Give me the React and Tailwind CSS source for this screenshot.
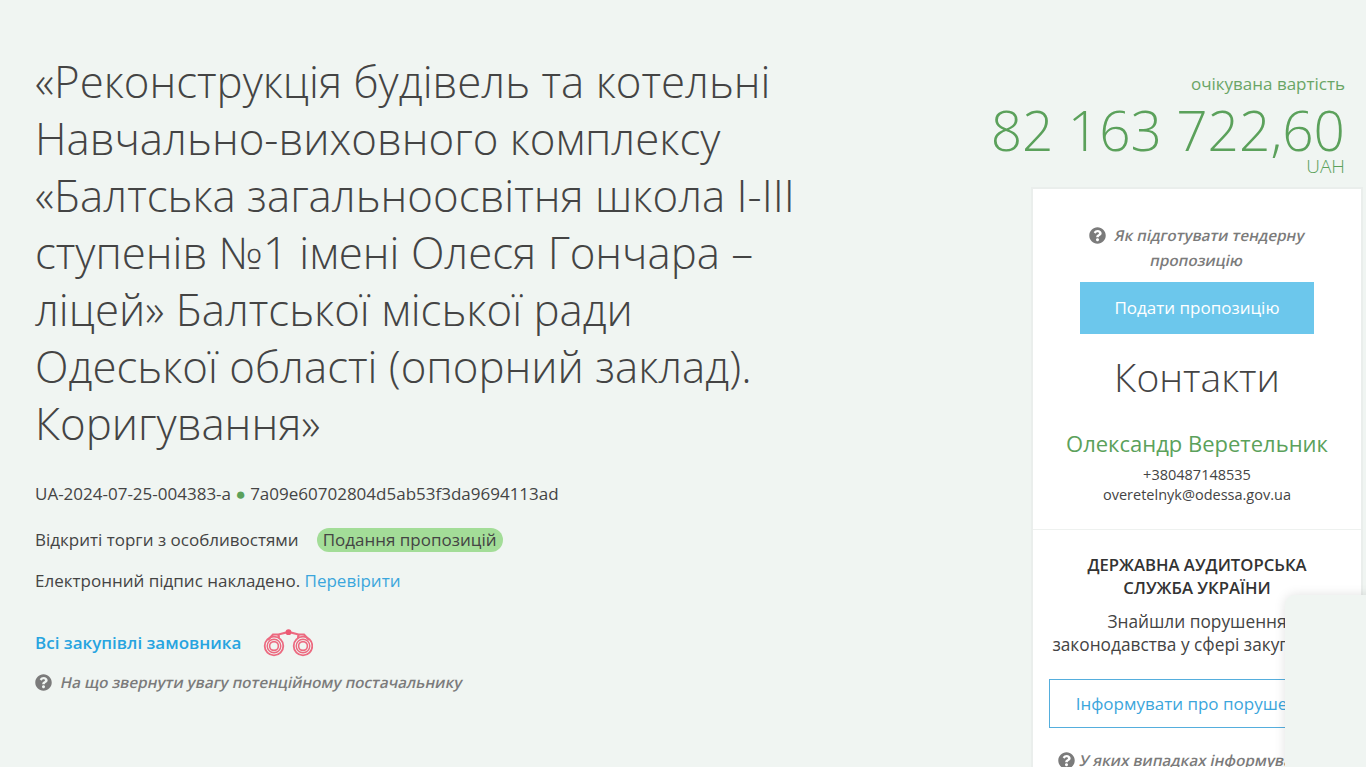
import React from "react";

function Q({ className = "" }) {
  return (
    <svg viewBox="0 0 512 512" width="17" height="17" className={className} fill="#7b7b7b">
      <path d="M504 256c0 137-111 248-248 248S8 393 8 256 119 8 256 8s248 111 248 248zM263 90c-54 0-89 23-116 63-4 5-3 12 3 16l35 26c5 4 13 3 17-2 18-22 30-35 57-35 20 0 45 13 45 32 0 15-12 22-32 33-23 13-54 29-54 70v6c0 7 5 12 12 12h56c7 0 12-5 12-12v-3c0-28 83-29 83-106 0-58-60-100-118-100zm-7 246c-25 0-46 21-46 46s21 46 46 46 46-21 46-46-21-46-46-46z" />
    </svg>
  );
}

function Binoculars() {
  return (
    <svg viewBox="0 0 50 28" width="50" height="28" fill="none" stroke="#ec6a80">
      <circle cx="11" cy="17" r="9.3" strokeWidth="1.8" />
      <circle cx="11" cy="17" r="6.8" strokeWidth="1.4" />
      <circle cx="11" cy="17" r="4.4" strokeWidth="1.6" />
      <circle cx="40" cy="17" r="9.3" strokeWidth="1.8" />
      <circle cx="40" cy="17" r="6.8" strokeWidth="1.4" />
      <circle cx="40" cy="17" r="4.4" strokeWidth="1.6" />
      <path d="M5 11 L10 5.5 L15.5 5.5 L25.5 3 L35.5 5.5 L41 5.5 L46 11 M15.5 6 L16 9 M35.5 6 L35 9" strokeWidth="2.2" />
      <circle cx="25.5" cy="3.2" r="2.9" fill="#ec5a74" stroke="none" />
    </svg>
  );
}

export default function App() {
  return (
    <div
      className="relative h-[767px] overflow-hidden bg-[#f0f5f2] text-[#444444]"
      style={{ fontFamily: '"Open Sans", sans-serif' }}
    >
      <div className="flex justify-between pl-[35px] pr-[3px] pt-[53px]">
        <div className="w-[770px]">
          <h1 className="m-0 text-[43.8px] font-light leading-[57px] text-[#444444]">
            «Реконструкція будівель та котельні Навчально-виховного комплексу «Балтська загальноосвітня школа I-III ступенів №1 імені Олеся Гончара – ліцей» Балтської міської ради Одеської області (опорний заклад). Коригування»
          </h1>
          <div className="mt-[30px] text-[17px] leading-[24px]">
            UA-2024-07-25-004383-a <span className="text-[17px] leading-[24px] text-[#5ba15b]">●</span> 7a09e60702804d5ab53f3da9694113ad
          </div>
          <div className="mt-[22px] flex items-center text-[17px] leading-[24px]">
            <span>Відкриті торги з особливостями</span>
            <span className="ml-[18px] rounded-[12px] bg-[#a3dd98] px-[6px]">Подання пропозицій</span>
          </div>
          <div className="mt-[17px] text-[17px] leading-[24px]">
            Електронний підпис накладено. <span className="text-[#3ba6dc]">Перевірити</span>
          </div>
          <div className="mt-[38px] flex h-[24px] items-center">
            <span className="text-[17px] font-semibold leading-[24px] text-[#27a4e0]">Всі закупівлі замовника</span>
            <span className="ml-[22px] block h-[28px]"><Binoculars /></span>
          </div>
          <div className="mt-[15px] flex items-center text-[15.2px] font-semibold leading-[24px] text-[#7b7b7b]">
            <Q />
            <span className="ml-[9px] inline-block -skew-x-12">На що звернути увагу потенційному постачальнику</span>
          </div>
        </div>
        <div className="flex w-[332px] flex-col items-end">
          <div className="mr-[18px] mt-[19px] whitespace-nowrap text-[17px] leading-[24px] text-[#6aa566]">очікувана вартість</div>
          <div className="mr-[18px] mt-[5px] whitespace-nowrap text-[55px] font-light leading-[58px] text-[#5ba15b]">82 163 722,60</div>
          <div className="mr-[18px] mt-[-5px] text-[19px] font-light leading-[24px] text-[#5ba15b]">UAH</div>
          <div className="mt-[9px] w-[332px] shrink-0 border-2 border-[#eaeeec] bg-white">
            <div className="flex flex-col items-center px-[30px] pb-[24px] pt-[34px] text-center">
              <div className="text-[15.2px] font-semibold leading-[25px] text-[#7b7b7b]">
                <div className="flex items-center justify-center">
                  <Q className="mr-[9px]" />
                  <span className="inline-block -skew-x-12">Як підготувати тендерну</span>
                </div>
                <div className="-skew-x-12">пропозицію</div>
              </div>
              <div className="mt-[9px] flex h-[52px] w-[234px] items-center justify-center bg-[#6cc7ec] text-[17px] text-white">
                Подати пропозицію
              </div>
              <div className="mt-[15px] text-[39px] font-light leading-[56px] text-[#444444]">Контакти</div>
              <div className="mt-[23px] whitespace-nowrap text-[22px] leading-[30px] text-[#5ba15b]">Олександр Веретельник</div>
              <div className="mt-[7px] text-[14.5px] leading-[20px]">+380487148535</div>
              <div className="text-[14.5px] leading-[20px]">overetelnyk@odessa.gov.ua</div>
            </div>
            <div className="flex flex-col items-center border-t border-[#eef1ef] px-[14px] pt-[23px] text-center">
              <div className="w-[260px] text-[16.7px] font-semibold leading-[23px] text-[#333333]">ДЕРЖАВНА АУДИТОРСЬКА СЛУЖБА УКРАЇНИ</div>
              <div className="mt-[11px] text-[17.3px] leading-[23px]">Знайшли порушення законодавства у сфері закупівель?</div>
              <div className="mt-[23px] flex h-[49px] w-[296px] shrink-0 items-center justify-center whitespace-nowrap border border-[#55aedd] text-[17px] text-[#3ba6dc]">
                Інформувати про порушення
              </div>
              <div className="mr-[17px] mt-[20px] flex items-center whitespace-nowrap text-[15.2px] font-semibold leading-[25px] text-[#7b7b7b]">
                <Q className="mr-[5px]" />
                <span className="inline-block -skew-x-12">У яких випадках інформувати?</span>
              </div>
            </div>
          </div>
        </div>
      </div>
      <div className="absolute left-[1285px] top-[595px] h-[200px] w-[120px] rounded-tl-[10px] bg-[#f0f5f2] shadow-[0_0_12px_rgba(0,0,0,0.12)]" />
    </div>
  );
}
